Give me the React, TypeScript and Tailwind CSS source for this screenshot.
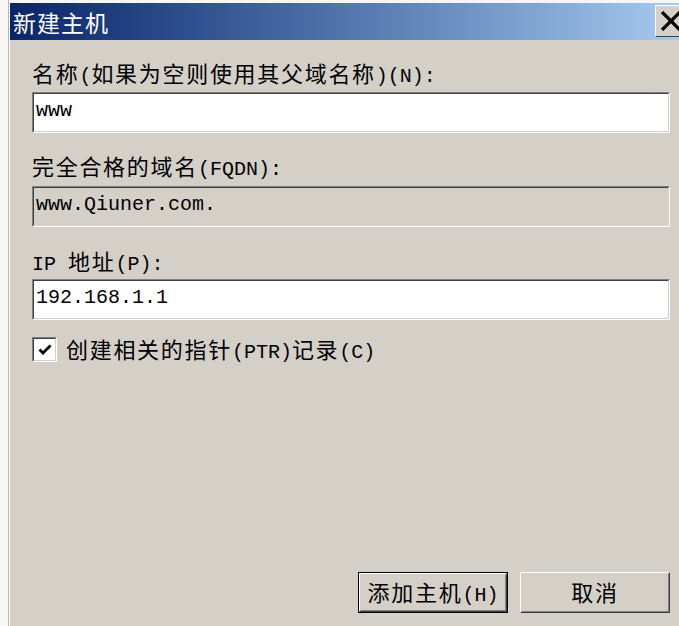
import React from 'react';

const cjk = "font-['Noto_Sans_CJK_SC',sans-serif] text-[22px] leading-[20px] tracking-[1.7px]";
const latin = "font-['Liberation_Mono',monospace] text-[20px] leading-[20px]";

// SimSun-like mix: half-width latin, full-width CJK
const Mixed: React.FC<{ text: string }> = ({ text }) => (
  <>
    {text.split(/([\x00-\x7F]+)/).filter(Boolean).map((part, i) => (
      <span key={i} className={/^[\x00-\x7F]+$/.test(part) ? latin : cjk}>
        {part}
      </span>
    ))}
  </>
);

const Sunken: React.FC<{ value: string; disabled?: boolean }> = ({ value, disabled = false }) => (
  <div className="border border-t-[#808080] border-l-[#808080] border-b-white border-r-white">
    <div
      className={`h-[39px] border border-t-[#404040] border-l-[#404040] border-b-[#d4d0c8] border-r-[#d4d0c8] px-[2px] pt-[4px] leading-[24px] text-black ${
        disabled ? 'bg-[#d4d0c8]' : 'bg-white'
      }`}
    >
      <span className={latin}>{value}</span>
    </div>
  </div>
);

const Label: React.FC<{ text: string }> = ({ text }) => (
  <div className="h-[24px] leading-[24px] text-black whitespace-nowrap">
    <Mixed text={text} />
  </div>
);

const Button: React.FC<{ text: string; isDefault?: boolean }> = ({ text, isDefault = false }) => (
  <div className={`w-[150px] h-[41px] ${isDefault ? 'border border-black' : ''}`}>
    <div className="h-full border border-t-white border-l-white border-b-[#404040] border-r-[#404040]">
      <div className="h-full flex items-center justify-center border border-t-[#d4d0c8] border-l-[#d4d0c8] border-b-[#808080] border-r-[#808080] bg-[#d4d0c8] text-black whitespace-nowrap">
        <div className="h-[24px] leading-[24px]">
          <Mixed text={text} />
        </div>
      </div>
    </div>
  </div>
);

export default function App() {
  return (
    <div className="w-[679px] h-[626px] overflow-hidden flex bg-[#f6f6f4]">
      <div className="w-[8px] shrink-0" />
      <div className="w-px shrink-0 bg-[#b8b5ae]" />
      <div className="w-px shrink-0 bg-white" />
      <div className="flex-1 flex flex-col pt-[3px] min-w-0">
        <div className="h-[37px] shrink-0 flex items-center bg-gradient-to-r from-[#0a246a] to-[#a6caf0] pl-[3px] relative">
          <span className="font-['Noto_Sans_CJK_SC',sans-serif] text-[23px] leading-[26px] text-white tracking-[1px]">新建主机</span>
          <div className="absolute left-[645px] top-[2px] w-[30px] h-[32px] border border-t-white border-l-white border-b-[#404040] border-r-[#404040] bg-[#d4d0c8] flex items-center pl-[4px]">
            <svg width="22" height="20" viewBox="0 0 22 20">
              <path d="M2 1 L20 19 M20 1 L2 19" stroke="black" strokeWidth="3.2" fill="none" />
            </svg>
          </div>
        </div>
        <div className="flex-1 flex flex-col bg-[#d4d0c8] pl-[22px] pr-[9px] pt-[22px] pb-[13px]">
          <Label text="名称(如果为空则使用其父域名称)(N):" />
          <div className="mt-[6px]">
            <Sunken value="www" />
          </div>
          <div className="mt-[22px]">
            <Label text="完全合格的域名(FQDN):" />
          </div>
          <div className="mt-[7px]">
            <Sunken value="www.Qiuner.com." disabled />
          </div>
          <div className="mt-[23px]">
            <Label text="IP 地址(P):" />
          </div>
          <div className="mt-[5px]">
            <Sunken value="192.168.1.1" />
          </div>
          <div className="mt-[17px] flex items-center">
            <div className="w-[25px] h-[25px] border border-t-[#808080] border-l-[#808080] border-b-white border-r-white">
              <div className="w-full h-full border border-t-[#404040] border-l-[#404040] border-b-[#d4d0c8] border-r-[#d4d0c8] bg-white flex items-center justify-center">
                <svg width="14" height="12" viewBox="0 0 14 12">
                  <path d="M1.5 5.5 L5 9 L12.5 1.5" stroke="black" strokeWidth="2.8" fill="none" />
                </svg>
              </div>
            </div>
            <div className="ml-[9px]">
              <Label text="创建相关的指针(PTR)记录(C)" />
            </div>
          </div>
          <div className="flex-1" />
          <div className="flex justify-end gap-[12px]">
            <Button text="添加主机(H)" isDefault />
            <Button text="取消" />
          </div>
        </div>
      </div>
    </div>
  );
}
